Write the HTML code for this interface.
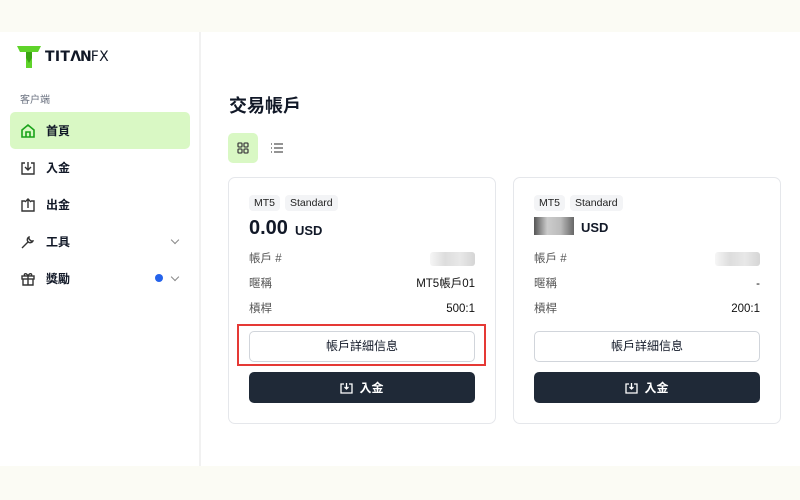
<!DOCTYPE html>
<html><head><meta charset="utf-8"><style>
*{margin:0;padding:0;box-sizing:border-box}
body{width:800px;height:500px;background:#fbfbf4;font-family:"Liberation Sans","Noto Sans CJK TC",sans-serif;color:#111827;position:relative;overflow:hidden}
.main{position:absolute;left:0;top:32px;width:800px;height:434px;background:#fff}
.side{position:absolute;left:0;top:0;width:201px;height:434px;border-right:2px solid #f1f1f1}
.logo{position:absolute;left:17px;top:14px;display:flex;align-items:center;gap:4px;font-weight:900;font-size:14px;letter-spacing:0.3px;font-family:"DejaVu Sans","Liberation Sans",sans-serif}
.lbl{position:absolute;left:20px;top:59px;font-size:10px;color:#6b7280}
.nav{position:absolute;left:10px;width:180px;height:37px;display:flex;align-items:center;padding-left:10px;font-size:12px;font-weight:bold;border-radius:5px}
.nav svg{margin-right:10px}
.act{background:#d9f8c4}
.chev{position:absolute;right:12px;top:14px;width:6px;height:6px;border-right:1.2px solid #888;border-bottom:1.2px solid #888;transform:rotate(45deg)}
h1{position:absolute;left:229px;top:60px;font-size:18px;font-weight:bold}
.tg{position:absolute;left:228px;top:101px;width:30px;height:30px;background:#d9f8c4;border-radius:5px}
.card{position:absolute;top:145px;width:268px;height:247px;border:1px solid #e5e7eb;border-radius:7px}
.tag{position:absolute;top:17px;height:16px;background:#f3f4f6;border-radius:4px;font-size:10.5px;line-height:16px;padding:0 5px;color:#222}
.amt{position:absolute;left:20px;top:39px;font-size:20px;font-weight:bold;display:flex;align-items:center}
.amt span{font-size:13px;margin-left:7px;margin-top:3px}
.row{position:absolute;left:20px;right:20px;height:16px;line-height:16px;font-size:11.5px;color:#555;display:flex;justify-content:space-between;align-items:center}
.row b{font-weight:normal;color:#111;line-height:16px}
.blur{width:45px;height:14px;background:linear-gradient(90deg,#f6f6f6,#ddd,#e8e8e8,#d5d5d5);border-radius:3px}
.btn1{position:absolute;left:20px;width:226px;top:153px;height:31px;border:1px solid #d1d5db;border-radius:5px;text-align:center;line-height:29px;font-size:12px}
.btn2{position:absolute;left:20px;width:226px;top:194px;height:31px;background:#1f2937;border-radius:5px;color:#fff;font-size:12px;font-weight:bold;display:flex;align-items:center;justify-content:center;gap:6px}
.red{position:absolute;left:237px;top:292px;width:249px;height:42px;border:2px solid #e53935}
</style></head><body>
<div class="main">
<div class="side">
<div class="logo"><svg width="24" height="22" viewBox="0 0 24 22"><path d="M0 0H24L21 6H15V22H9V6H3Z" fill="#5fd32a"/><path d="M9 6H15V12L12 17L9 12Z" fill="#3aa513"/></svg><span>TIT<span style="letter-spacing:-1px">ΛN</span><span style="font-weight:normal">FX</span></span></div>
<div class="lbl">客户端</div>
<div class="nav act" style="top:80px"><svg width="16" height="16" viewBox="0 0 16 16" fill="none" stroke="#1aa31a" stroke-width="1.6"><path d="M2 7L8 2L14 7V14H2Z"/><path d="M6 14V9H10V14"/></svg>首頁</div>
<div class="nav" style="top:117px"><svg width="16" height="16" viewBox="0 0 16 16" fill="none" stroke="#333" stroke-width="1.4"><path d="M5 3H2V14H14V3H11"/><path d="M8 2V10M5 7L8 10L11 7"/></svg>入金</div>
<div class="nav" style="top:154px"><svg width="16" height="16" viewBox="0 0 16 16" fill="none" stroke="#333" stroke-width="1.4"><path d="M5 4H2V14H14V4H11"/><path d="M8 11V2M5 5L8 2L11 5"/></svg>出金</div>
<div class="nav" style="top:191px"><svg width="16" height="16" viewBox="0 0 16 16" fill="none" stroke="#333" stroke-width="1.4"><path d="M2 14L8 8M9 3A3 3 0 1 0 13 7L11 7L9 5Z"/></svg>工具<i class="chev"></i></div>
<div class="nav" style="top:228px"><svg width="16" height="16" viewBox="0 0 16 16" fill="none" stroke="#333" stroke-width="1.4"><rect x="2" y="5" width="12" height="3"/><path d="M3 8V14H13V8M8 5V14M8 5C6 1 3 3 5 5M8 5C10 1 13 3 11 5"/></svg>獎勵<span style="position:absolute;left:145px;top:14px;width:8px;height:8px;border-radius:50%;background:#2563eb"></span><i class="chev"></i></div>
</div>
<h1>交易帳戶</h1>
<div class="tg"><svg width="30" height="30" viewBox="0 0 30 30" fill="none" stroke="#444" stroke-width="1.3"><rect x="10" y="10" width="4" height="4" rx="1"/><rect x="16" y="10" width="4" height="4" rx="1"/><rect x="10" y="16" width="4" height="4" rx="1"/><rect x="16" y="16" width="4" height="4" rx="1"/></svg></div>
<svg style="position:absolute;left:270px;top:110px" width="14" height="12" viewBox="0 0 14 12" stroke="#555" stroke-width="1.3"><path d="M1 2H2M4 2H13M1 6H2M4 6H13M1 10H2M4 10H13"/></svg>
<div class="card" style="left:228px">
<div class="tag" style="left:20px">MT5</div><div class="tag" style="left:56px">Standard</div>
<div class="amt">0.00<span>USD</span></div>
<div class="row" style="top:73px">帳戶 #<div class="blur"></div></div>
<div class="row" style="top:98px">暱稱<b>MT5帳戶01</b></div>
<div class="row" style="top:123px">槓桿<b>500:1</b></div>
<div class="btn1">帳戶詳細信息</div>
<div class="btn2"><svg width="13" height="12" viewBox="0 0 13 12" fill="none" stroke="#fff" stroke-width="1.3"><path d="M4 2H1V11H12V2H9M6.5 1V7M4.5 5L6.5 7L8.5 5"/></svg>入金</div>
</div>
<div class="card" style="left:513px">
<div class="tag" style="left:20px">MT5</div><div class="tag" style="left:56px">Standard</div>
<div class="amt"><i style="display:inline-block;width:40px;height:18px;background:linear-gradient(90deg,#555,#ccc,#bbb,#666);"></i><span>USD</span></div>
<div class="row" style="top:73px">帳戶 #<div class="blur"></div></div>
<div class="row" style="top:98px">暱稱<b>-</b></div>
<div class="row" style="top:123px">槓桿<b>200:1</b></div>
<div class="btn1">帳戶詳細信息</div>
<div class="btn2"><svg width="13" height="12" viewBox="0 0 13 12" fill="none" stroke="#fff" stroke-width="1.3"><path d="M4 2H1V11H12V2H9M6.5 1V7M4.5 5L6.5 7L8.5 5"/></svg>入金</div>
</div>
<div class="red"></div>
</div>
</body></html>
